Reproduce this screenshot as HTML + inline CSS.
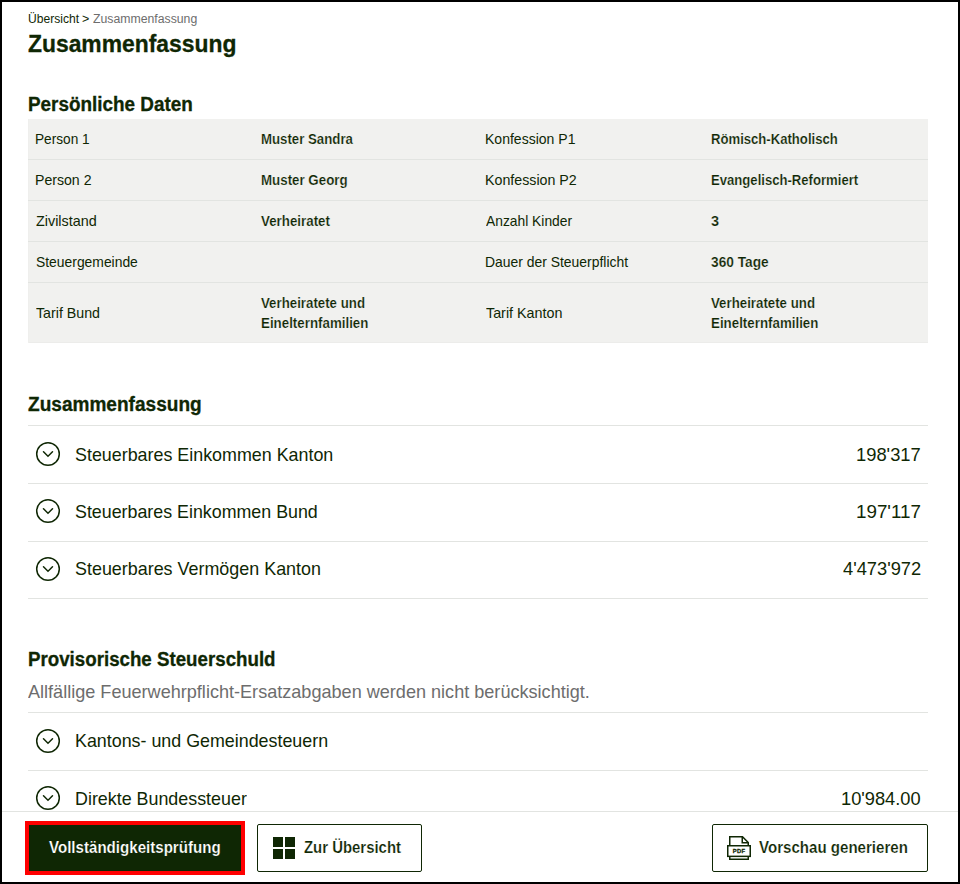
<!DOCTYPE html>
<html lang="de">
<head>
<meta charset="utf-8">
<title>Zusammenfassung</title>
<style>
html,body{margin:0;padding:0;background:#fff;}
body{width:960px;height:884px;overflow:hidden;font-family:"Liberation Sans", sans-serif;}
#frame{position:relative;width:960px;height:884px;box-sizing:border-box;overflow:hidden;background:#fff;}
#frame:after{content:"";position:absolute;left:0;top:0;width:956px;height:880px;border:2px solid #000;pointer-events:none;z-index:20;}
nav,section,footer,.row,.acc{display:block;margin:0;padding:0;}
.t{position:absolute;white-space:pre;line-height:20px;transform-origin:0 0;margin:0;padding:0;display:block;}
.ln,.sep{position:absolute;left:28px;width:900px;height:1px;background:#e2e4e1;}
.tbl{position:absolute;left:28px;top:119px;width:900px;height:224px;background:#f1f1ef;box-shadow:inset 1px 0 0 #efefed, inset 0 -1px 0 #ececea;}
.ic{position:absolute;overflow:visible;}
.foot{position:absolute;left:0;top:811px;width:960px;height:73px;background:#fff;border-top:1px solid #e2e4e1;box-sizing:border-box;}
.btn{position:absolute;box-sizing:border-box;margin:0;padding:0;border:1px solid #0f2704;border-radius:2px;background:#fff;top:824px;height:48px;font-family:inherit;text-align:left;overflow:visible;}
.btn.primary{background:#0f2704;left:29px;top:825px;width:212px;height:46px;border:0;border-radius:0;outline:4px solid #ff0000;}
</style>
</head>
<body>
<div id="frame">
<nav class="breadcrumb">
<span class="t" style="left:27.59px;top:9px;font-size:12px;color:#0f2704;font-weight:400;transform:scaleX(1.0080)">Übersicht</span>
<span class="t" style="left:82.23px;top:9px;font-size:12px;color:#0f2704;font-weight:400;transform:scaleX(1.0417)">&gt;</span>
<span class="t" style="left:92.84px;top:9px;font-size:12px;color:#6d6d6d;font-weight:400;transform:scaleX(1.0213)">Zusammenfassung</span>
</nav>
<h1 class="t" style="left:28.03px;top:34px;font-size:24.5px;color:#0f2704;font-weight:700;-webkit-text-stroke:0.3px;transform:scaleX(0.9333)">Zusammenfassung</h1>
<section class="personal">
<h2 class="t" style="left:28.09px;top:94px;font-size:19.5px;color:#0f2704;font-weight:700;-webkit-text-stroke:0.3px;transform:scaleX(0.9685)">Persönliche Daten</h2>
<div class="tbl"></div>
<div class="sep" style="top:159px"></div><div class="sep" style="top:200px"></div><div class="sep" style="top:241px"></div><div class="sep" style="top:282px"></div>
<div class="row">
<div class="t" style="left:35.32px;top:129px;font-size:14.5px;color:#0f2704;font-weight:400;transform:scaleX(0.9422)">Person 1</div>
<div class="t" style="left:260.59px;top:129px;font-size:14.5px;color:#0f2704;font-weight:700;-webkit-text-stroke:0.2px #f1f1ef;transform:scaleX(0.9123)">Muster Sandra</div>
<div class="t" style="left:485.29px;top:129px;font-size:14.5px;color:#0f2704;font-weight:400;transform:scaleX(0.9672)">Konfession P1</div>
<div class="t" style="left:710.60px;top:129px;font-size:14.5px;color:#0f2704;font-weight:700;-webkit-text-stroke:0.2px #f1f1ef;transform:scaleX(0.9042)">Römisch-Katholisch</div>
</div>
<div class="row">
<div class="t" style="left:35.28px;top:170px;font-size:14.5px;color:#0f2704;font-weight:400;transform:scaleX(0.9732)">Person 2</div>
<div class="t" style="left:260.58px;top:170px;font-size:14.5px;color:#0f2704;font-weight:700;-webkit-text-stroke:0.2px #f1f1ef;transform:scaleX(0.9187)">Muster Georg</div>
<div class="t" style="left:485.27px;top:170px;font-size:14.5px;color:#0f2704;font-weight:400;transform:scaleX(0.9809)">Konfession P2</div>
<div class="t" style="left:710.60px;top:170px;font-size:14.5px;color:#0f2704;font-weight:700;-webkit-text-stroke:0.2px #f1f1ef;transform:scaleX(0.9040)">Evangelisch-Reformiert</div>
</div>
<div class="row">
<div class="t" style="left:36.00px;top:211px;font-size:14.5px;color:#0f2704;font-weight:400;transform:scaleX(0.9916)">Zivilstand</div>
<div class="t" style="left:261.27px;top:211px;font-size:14.5px;color:#0f2704;font-weight:700;-webkit-text-stroke:0.2px #f1f1ef;transform:scaleX(0.9195)">Verheiratet</div>
<div class="t" style="left:486.20px;top:211px;font-size:14.5px;color:#0f2704;font-weight:400;transform:scaleX(0.9533)">Anzahl Kinder</div>
<div class="t" style="left:711.00px;top:211px;font-size:14.5px;color:#0f2704;font-weight:700;-webkit-text-stroke:0.2px #f1f1ef;transform:scaleX(1.0000)">3</div>
</div>
<div class="row">
<div class="t" style="left:35.78px;top:252px;font-size:14.5px;color:#0f2704;font-weight:400;transform:scaleX(0.9571)">Steuergemeinde</div>
<div class="t" style="left:485.30px;top:252px;font-size:14.5px;color:#0f2704;font-weight:400;transform:scaleX(0.9594)">Dauer der Steuerpflicht</div>
<div class="t" style="left:711.03px;top:252px;font-size:14.5px;color:#0f2704;font-weight:700;-webkit-text-stroke:0.2px #f1f1ef;transform:scaleX(0.9458)">360 Tage</div>
</div>
<div class="row">
<div class="t" style="left:36.25px;top:303px;font-size:14.5px;color:#0f2704;font-weight:400;transform:scaleX(0.9805)">Tarif Bund</div>
<div class="t" style="left:261.27px;top:293px;font-size:14.5px;color:#0f2704;font-weight:700;-webkit-text-stroke:0.2px #f1f1ef;transform:scaleX(0.9154)">Verheiratete und</div>
<div class="t" style="left:260.58px;top:313px;font-size:14.5px;color:#0f2704;font-weight:700;-webkit-text-stroke:0.2px #f1f1ef;transform:scaleX(0.9194)">Einelternfamilien</div>
<div class="t" style="left:486.25px;top:303px;font-size:14.5px;color:#0f2704;font-weight:400;transform:scaleX(0.9869)">Tarif Kanton</div>
<div class="t" style="left:711.27px;top:293px;font-size:14.5px;color:#0f2704;font-weight:700;-webkit-text-stroke:0.2px #f1f1ef;transform:scaleX(0.9154)">Verheiratete und</div>
<div class="t" style="left:710.58px;top:313px;font-size:14.5px;color:#0f2704;font-weight:700;-webkit-text-stroke:0.2px #f1f1ef;transform:scaleX(0.9194)">Einelternfamilien</div>
</div>
</section>
<section class="summary">
<h2 class="t" style="left:28.01px;top:394px;font-size:19.5px;color:#0f2704;font-weight:700;-webkit-text-stroke:0.3px;transform:scaleX(0.9773)">Zusammenfassung</h2>
<div class="ln" style="top:425px"></div>
<div class="acc"><svg class="ic" style="left:35.05px;top:440.9px" width="26" height="26" viewBox="0 0 26 26"><circle cx="13" cy="13" r="11.3" fill="none" stroke="#0f2704" stroke-width="1.5"/><path d="M8.5 10.8 L13 15.2 L17.5 10.8" fill="none" stroke="#0f2704" stroke-width="1.5" stroke-linecap="round"/></svg><span class="t" style="left:75.28px;top:445px;font-size:18.5px;color:#0f2704;font-weight:400;transform:scaleX(0.9661)">Steuerbares Einkommen Kanton</span><span class="t" style="left:855.91px;top:445px;font-size:18.5px;color:#0f2704;font-weight:400;transform:scaleX(0.9921)">198'317</span></div>
<div class="ln" style="top:483px"></div>
<div class="acc"><svg class="ic" style="left:35.05px;top:497.8px" width="26" height="26" viewBox="0 0 26 26"><circle cx="13" cy="13" r="11.3" fill="none" stroke="#0f2704" stroke-width="1.5"/><path d="M8.5 10.8 L13 15.2 L17.5 10.8" fill="none" stroke="#0f2704" stroke-width="1.5" stroke-linecap="round"/></svg><span class="t" style="left:75.29px;top:502px;font-size:18.5px;color:#0f2704;font-weight:400;transform:scaleX(0.9636)">Steuerbares Einkommen Bund</span><span class="t" style="left:855.88px;top:502px;font-size:18.5px;color:#0f2704;font-weight:400;transform:scaleX(1.0163)">197'117</span></div>
<div class="ln" style="top:541px"></div>
<div class="acc"><svg class="ic" style="left:35.05px;top:555.8px" width="26" height="26" viewBox="0 0 26 26"><circle cx="13" cy="13" r="11.3" fill="none" stroke="#0f2704" stroke-width="1.5"/><path d="M8.5 10.8 L13 15.2 L17.5 10.8" fill="none" stroke="#0f2704" stroke-width="1.5" stroke-linecap="round"/></svg><span class="t" style="left:75.28px;top:559px;font-size:18.5px;color:#0f2704;font-weight:400;transform:scaleX(0.9682)">Steuerbares Vermögen Kanton</span><span class="t" style="left:842.61px;top:559px;font-size:18.5px;color:#0f2704;font-weight:400;transform:scaleX(0.9891)">4'473'972</span></div>
<div class="ln" style="top:598px"></div>
</section>
<section class="taxdue">
<h2 class="t" style="left:28.30px;top:649px;font-size:19.5px;color:#0f2704;font-weight:700;-webkit-text-stroke:0.3px;transform:scaleX(0.9597)">Provisorische Steuerschuld</h2>
<p class="t" style="left:28.40px;top:682px;font-size:18.5px;color:#6d6d6d;font-weight:400;transform:scaleX(0.9774)">Allfällige Feuerwehrpflicht-Ersatzabgaben werden nicht berücksichtigt.</p>
<div class="ln" style="top:712px"></div>
<div class="acc"><svg class="ic" style="left:35.05px;top:727.7px" width="26" height="26" viewBox="0 0 26 26"><circle cx="13" cy="13" r="11.3" fill="none" stroke="#0f2704" stroke-width="1.5"/><path d="M8.5 10.8 L13 15.2 L17.5 10.8" fill="none" stroke="#0f2704" stroke-width="1.5" stroke-linecap="round"/></svg><span class="t" style="left:74.80px;top:731px;font-size:18.5px;color:#0f2704;font-weight:400;transform:scaleX(0.9651)">Kantons- und Gemeindesteuern</span></div>
<div class="ln" style="top:770px"></div>
<div class="acc"><svg class="ic" style="left:35.05px;top:784.7px" width="26" height="26" viewBox="0 0 26 26"><circle cx="13" cy="13" r="11.3" fill="none" stroke="#0f2704" stroke-width="1.5"/><path d="M8.5 10.8 L13 15.2 L17.5 10.8" fill="none" stroke="#0f2704" stroke-width="1.5" stroke-linecap="round"/></svg><span class="t" style="left:74.80px;top:789px;font-size:18.5px;color:#0f2704;font-weight:400;transform:scaleX(0.9660)">Direkte Bundessteuer</span><span class="t" style="left:841.02px;top:789px;font-size:18.5px;color:#0f2704;font-weight:400;transform:scaleX(0.9873)">10'984.00</span></div>
</section>
<footer>
<div class="foot"></div>
<button type="button" class="btn primary"><span class="t" style="left:19.51px;top:13px;font-size:16px;color:#ffffff;font-weight:700;-webkit-text-stroke:0.2px #0f2704;transform:scaleX(0.9435)">Vollständigkeitsprüfung</span></button>
<button type="button" class="btn" style="left:257px;width:165px">
<svg class="ic" style="left:15px;top:12px" width="22" height="22" viewBox="0 0 22 22"><path fill="#0f2704" d="M0 0h10v10H0zM12 0h10v10H12zM0 12h10v10H0zM12 12h10v10H12z"/></svg>
<span class="t" style="left:45.53px;top:13px;font-size:16px;color:#0f2704;font-weight:700;-webkit-text-stroke:0.2px #fff;transform:scaleX(0.9322)">Zur Übersicht</span></button>
<button type="button" class="btn" style="left:712px;width:216px">
<svg class="ic" style="left:14px;top:11px" width="24" height="24" viewBox="0 0 24 24">
<g fill="none" stroke="#0f2704" stroke-width="1.5" stroke-linejoin="miter">
<path d="M2.75 9.5V0.75H15.5L21.25 6.5V9.5"/>
<path d="M15.25 1V6.75H21"/>
<rect x="0.75" y="9.75" width="22.5" height="10.6"/>
<path d="M2.75 20.35V23.25H21.25V20.35"/>
</g>
<text x="12.2" y="17.1" text-anchor="middle" font-family="Liberation Sans, sans-serif" font-weight="700" font-size="5.8" fill="#0f2704" stroke="#0f2704" stroke-width="0.3" letter-spacing="0.35">PDF</text>
</svg>
<span class="t" style="left:46.01px;top:13px;font-size:16px;color:#0f2704;font-weight:700;-webkit-text-stroke:0.2px #fff;transform:scaleX(0.9425)">Vorschau generieren</span></button>
</footer>
</div>
</body>
</html>
